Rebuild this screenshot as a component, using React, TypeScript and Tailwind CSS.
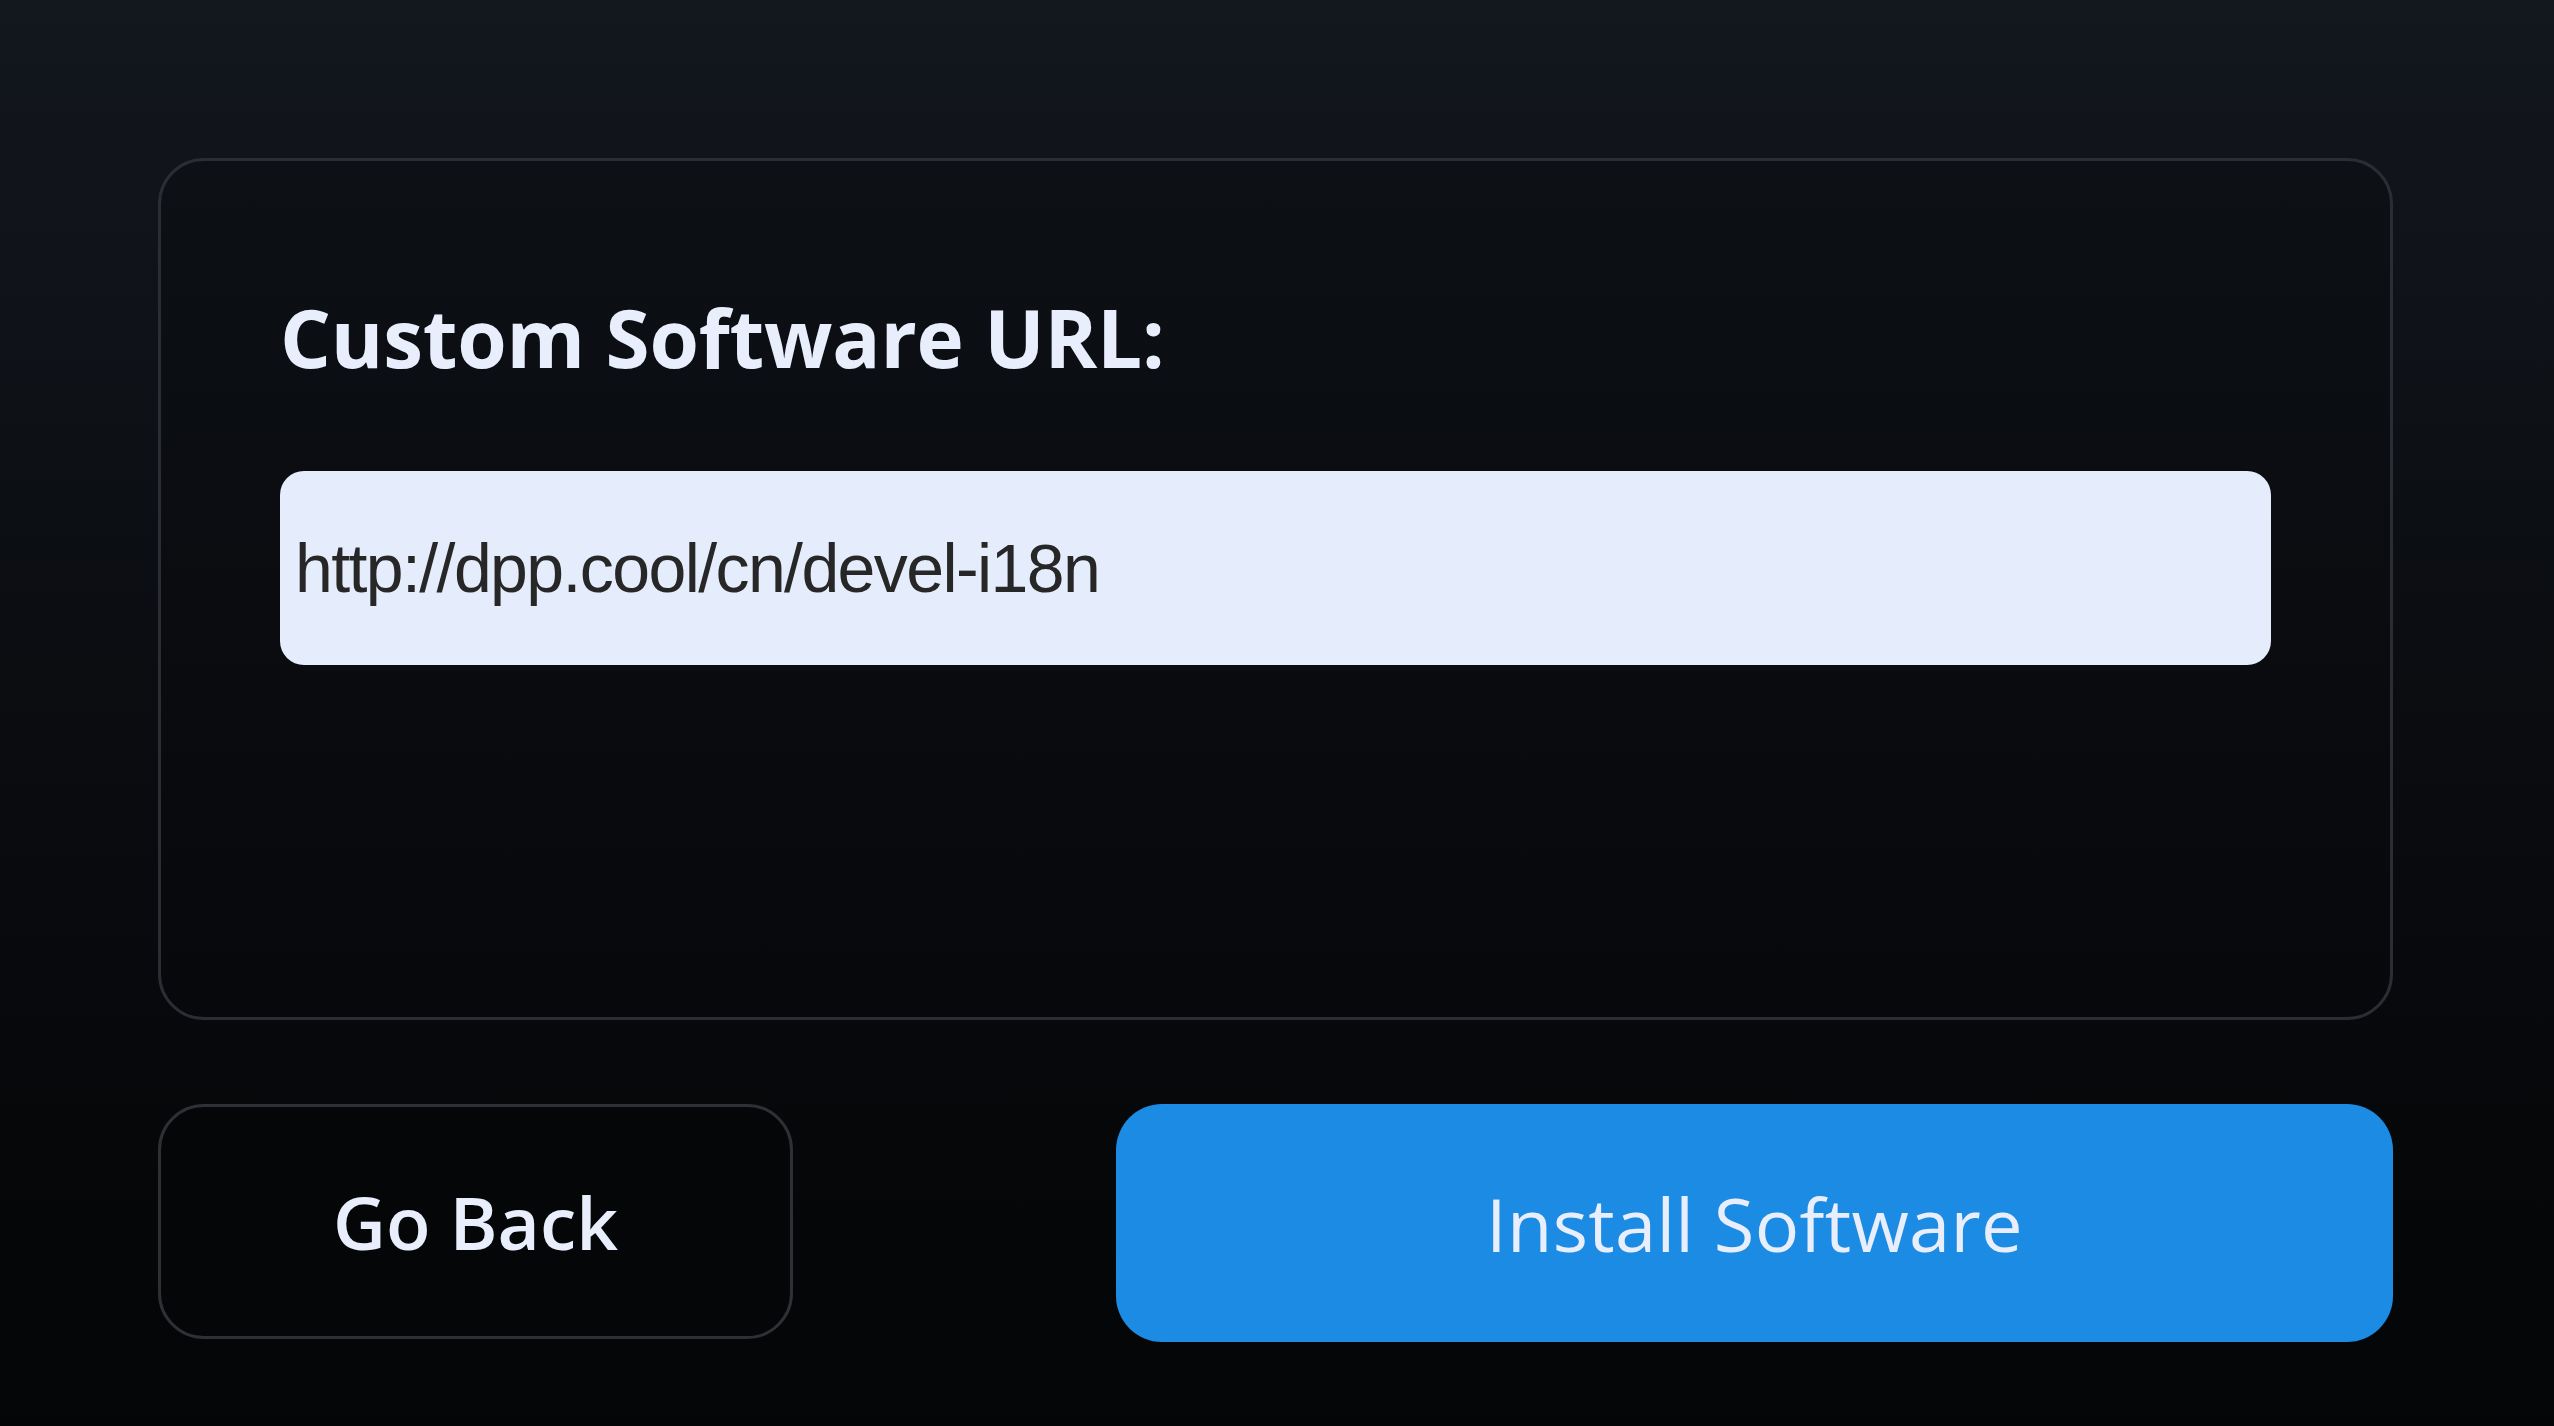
import React from "react";

export default function App() {
  return (
    <div className="h-[1426px] w-[2554px] overflow-hidden bg-linear-to-b from-[#13171e] via-[#0a0c10] to-[#040506] pl-[158px] pt-[158px] font-['Open_Sans','Noto_Sans',sans-serif]">
      <div className="flex w-[2235px] flex-col">
        {/* URL card */}
        <div className="h-[862px] rounded-[46px] border-[3px] border-[#2a2d33] bg-linear-to-b from-[#0d1015] to-[#07080b] px-[119px] pt-[136px]">
          <h1 className="text-[80px] font-bold leading-[80px] tracking-[-0.2px] text-[#e8eefc]">
            Custom Software URL:
          </h1>
          <div className="mt-[94px] flex h-[194px] items-center rounded-[24px] bg-[#e5edfd] pl-[15px]">
            <span className="font-['Liberation_Sans',Arial,sans-serif] text-[68px] tracking-[-1.6px] text-[#272727]">
              http://dpp.cool/cn/devel-i18n
            </span>
          </div>
        </div>

        {/* actions */}
        <div className="mt-[84px] flex gap-[323px]">
          <button className="flex h-[235px] w-[635px] items-center justify-center rounded-[46px] border-[3px] border-[#2d3035] bg-[#050608] text-[73px] font-semibold text-[#e8eefc]">
            Go Back
          </button>
          <button className="flex h-[238px] flex-1 items-center justify-center rounded-[46px] bg-[#1b8be3] text-[74px] font-medium tracking-[0.3px] text-[#e8eefc]">
            Install Software
          </button>
        </div>
      </div>
    </div>
  );
}
